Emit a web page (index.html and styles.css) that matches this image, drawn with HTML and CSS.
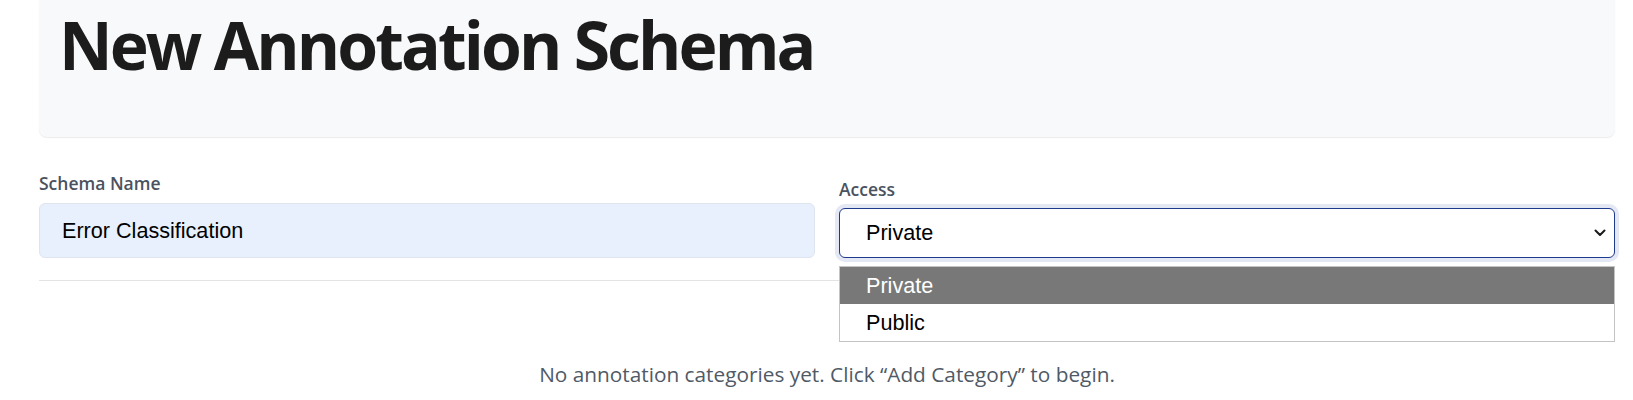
FILE: index.html
```html
<!DOCTYPE html>
<html lang="en">
<head>
<meta charset="utf-8">
<title>New Annotation Schema</title>
<link rel="stylesheet" href="styles.css">
</head>
<body>
<div class="page">
  <header class="hero">
    <h1 class="hero-title">New Annotation Schema</h1>
  </header>

  <div class="form-row">
    <div class="field">
      <label class="field-label" for="schema-name">Schema Name</label>
      <input class="text-input" id="schema-name" type="text" value="Error Classification">
    </div>
    <div class="field">
      <label class="field-label field-label-access">Access</label>
      <div class="select-wrap">
        <div class="select-box">
          <span class="select-value">Private</span>
          <svg class="select-chevron" width="12" height="8" viewBox="0 0 12 8" aria-hidden="true">
            <path d="M1.5 1.5 L6 6 L10.5 1.5" fill="none" stroke="#1a1a1a" stroke-width="2" stroke-linecap="round" stroke-linejoin="round"/>
          </svg>
        </div>
        <ul class="select-menu">
          <li class="select-option is-active">Private</li>
          <li class="select-option">Public</li>
        </ul>
      </div>
    </div>
  </div>

  <hr class="divider">

  <p class="empty-state">No annotation categories yet. Click “Add Category” to begin.</p>
</div>
</body>
</html>
```

FILE: styles.css
```css
* {
  box-sizing: border-box;
}

html, body {
  margin: 0;
  padding: 0;
  background: #ffffff;
}

body {
  font-family: "Open Sans", "Noto Sans", sans-serif;
  color: #1c1c1c;
  overflow: hidden;
}

.page {
  padding: 0 18px 0 39px;
}

.hero {
  background: #f8f9fa;
  border-radius: 0 0 8px 8px;
  box-shadow: 0 1px 1px rgba(0, 0, 0, 0.08);
  padding: 5px 20px 53px;
}

.hero-title {
  margin: 0;
  font-family: "Open Sans", "Noto Sans", sans-serif;
  font-weight: 700;
  font-size: 66px;
  line-height: 1.2;
  color: #1c1c1c;
  letter-spacing: -2.9px;
}

.form-row {
  display: flex;
  gap: 24px;
  align-items: flex-end;
  margin-top: 35px;
}

.field {
  flex: 1 1 0;
  display: flex;
  flex-direction: column;
}

.field-label {
  font-weight: 600;
  font-size: 17.5px;
  line-height: 22px;
  color: #4a5260;
  margin-bottom: 9px;
}

.field-label-access {
  margin-bottom: 8px;
}

.text-input {
  height: 55px;
  width: 100%;
  border: 1px solid #dfe5ef;
  border-radius: 6px;
  background: #e8f0fe;
  padding: 0 22px;
  font-family: "Liberation Sans", Arial, sans-serif;
  font-size: 21.6px;
  color: #000000;
  outline: none;
}

.select-wrap {
  position: relative;
}

.select-box {
  height: 50px;
  border: 1px solid #1e3a8a;
  border-radius: 6px;
  box-shadow: 0 0 0 4px #e4e8f4;
  background: #ffffff;
  display: flex;
  align-items: center;
  justify-content: space-between;
  padding: 0 8px 0 26px;
}

.select-value {
  font-family: "Liberation Sans", Arial, sans-serif;
  font-size: 21.6px;
  color: #000000;
}

.select-chevron {
  display: block;
}

.select-menu {
  position: absolute;
  top: calc(100% + 8px);
  left: 0;
  right: 0;
  margin: 0;
  padding: 0;
  list-style: none;
  background: #ffffff;
  border: 1px solid #c4c4c4;
  z-index: 5;
}

.select-option {
  height: 37px;
  line-height: 37px;
  padding: 0 26px;
  font-family: "Liberation Sans", Arial, sans-serif;
  font-size: 21.6px;
  color: #000000;
}

.select-option.is-active {
  background: #787878;
  color: #ffffff;
}

.divider {
  margin: 22px 0 0;
  border: 0;
  border-top: 1px solid #e3e3e3;
}

.empty-state {
  margin: 79px 0 0;
  text-align: center;
  font-size: 20.8px;
  line-height: 28px;
  color: #505a66;
}
```
